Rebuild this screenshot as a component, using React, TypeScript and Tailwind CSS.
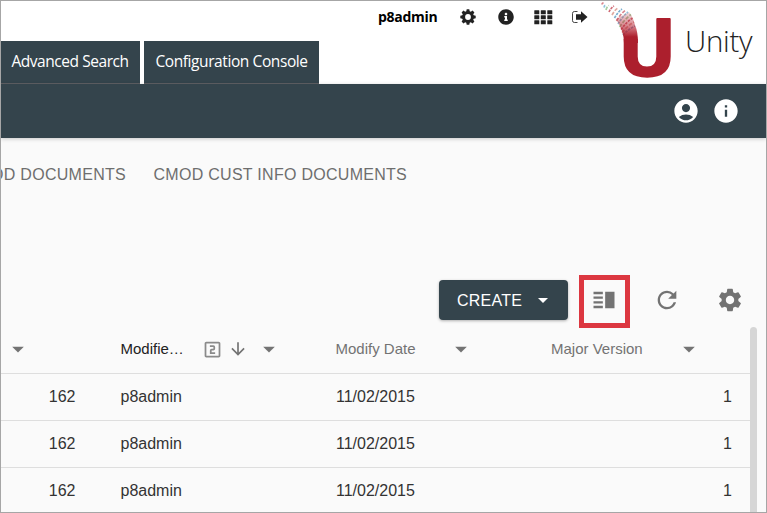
import React from "react";
import {
  MdAccountCircle,
  MdInfo,
  MdVerticalSplit,
  MdRefresh,
  MdSettings,
  MdArrowDropDown,
  MdOutlineLooksTwo,
  MdArrowDownward,
} from "react-icons/md";
import { FaInfoCircle } from "react-icons/fa";

const rows = [
  { id: "162", modifier: "p8admin", date: "11/02/2015", version: "1" },
  { id: "162", modifier: "p8admin", date: "11/02/2015", version: "1" },
  { id: "162", modifier: "p8admin", date: "11/02/2015", version: "1" },
];

function CogIcon() {
  return (
    <svg width="16" height="16" viewBox="0 0 16 16" fill="#222">
      <path
        fillRule="evenodd"
        d="M6.7.3h2.6l.4 2 1.1.5 1.8-1.2 1.8 1.8-1.2 1.8.5 1.1 2 .4v2.6l-2 .4-.5 1.1 1.2 1.8-1.8 1.8-1.8-1.2-1.1.5-.4 2H6.7l-.4-2-1.1-.5-1.8 1.2-1.8-1.8 1.2-1.8-.5-1.1-2-.4V6.7l2-.4.5-1.1-1.2-1.8 1.8-1.8 1.8 1.2 1.1-.5zM8 5.1a2.9 2.9 0 1 0 0 5.8 2.9 2.9 0 0 0 0-5.8z"
      />
    </svg>
  );
}

function GridIcon() {
  return (
    <svg width="19" height="15" viewBox="0 0 19 15" fill="#222">
      {[0, 5, 10].map((y) =>
        [0, 6.5, 13].map((x) => (
          <rect key={`${x}-${y}`} x={x + 0.3} y={y + 0.3} width="5" height="4" rx="0.4" />
        ))
      )}
    </svg>
  );
}

function LogoutIcon() {
  return (
    <svg width="17" height="14" viewBox="0 0 17 14">
      <path d="M6.500 1.500H3.300A1.900 1.900 0 0 0 1.500 3.300v7.400a1.900 1.900 0 0 0 1.800 1.800h3.200" fill="none" stroke="#444" strokeWidth="1" />
      <path d="M10 1.200 16.500 7 10 12.800V9.800H5V4.200h5z" fill="#222" />
    </svg>
  );
}

function UnityLogo() {
  const colors = ["#d9848c", "#8fc4dc", "#a6cfa2", "#cf6b76", "#e0a9a0", "#79aed0"];
  // Each entry is a short band across the plume: start x, start y, end x, end y.
  const bands = [
    [2, 3.500, 3.500, 2.500], [4, 6.5, 6, 4.5], [6, 9, 9, 4.5], [9, 11, 14, 5],
    [12, 14, 18.500, 6.500], [14.500, 17, 22, 8], [16.500, 20, 25, 9.500],
    [18, 23, 28, 11], [19.500, 26, 31, 13.500], [21, 28.500, 32.500, 17],
    [22, 31.500, 34, 21], [23, 34, 35, 25],
  ];
  return (
    <svg width="76" height="80" viewBox="0 0 76 80">
      <defs>
        <linearGradient id="stem" x1="0" y1="0" x2="0" y2="1">
          <stop offset="0" stopColor="#b51f2e" stopOpacity="0.15" />
          <stop offset="0.45" stopColor="#b51f2e" stopOpacity="0.55" />
          <stop offset="0.8" stopColor="#ac1f2d" />
        </linearGradient>
      </defs>
      {bands.map(([x1, y1, x2, y2], i) => (
        <path
          key={i}
          d={`M${x1} ${y1} Q${(x1 + x2) / 2 - 0.5} ${(y1 + y2) / 2 - 1.5} ${x2} ${y2}`}
          fill="none"
          stroke={colors[i % colors.length]}
          strokeWidth="1.7"
          strokeDasharray={i % 2 ? "2.500 1" : "3.500 1.500"}
        />
      ))}
      <path d="M16 18 29 11Q33 16 35 24Q38 31 38 42H24Q24 30 16 18Z" fill="url(#stem)" />
      <path
        d="M23.700 38h14v17.500q0 10 9.300 10t9.300-10V18q0-1 1-1h12.400q1 0 1 1v37.500q0 21.200-23.500 21.200T23.700 55.500z"
        fill="#ac1f2d"
      />
    </svg>
  );
}

export default function App() {
  return (
    <div className="flex h-[513px] w-[767px] flex-col overflow-hidden border border-[#a6a6a6] bg-[#fafafa] font-['Liberation_Sans',Arial,sans-serif] text-[16px] leading-[20px] whitespace-nowrap">
      <header className="flex h-[83px] shrink-0 bg-white font-['Open_Sans',sans-serif]">
        <div className="flex w-[599px] flex-col justify-between">
          <div className="flex h-[32px] items-center pl-[377px]">
            <span className="w-[82px] text-[14px] font-bold tracking-[-0.3px] text-black">p8admin</span>
            <span className="w-[38px]"><CogIcon /></span>
            <span className="w-[36px]"><FaInfoCircle size={16} color="#222" /></span>
            <span className="w-[37px]"><GridIcon /></span>
            <LogoutIcon />
          </div>
          <nav className="flex h-[43px] gap-1 text-[15.5px] text-white">
            <a className="flex w-[139px] items-center justify-center border-b border-[#5f6064] bg-[#34444c] pr-px pb-[3px] tracking-[-0.45px]">Advanced Search</a>
            <a className="flex w-[175px] items-center justify-center border-b border-[#5f6064] bg-[#34444c] pb-[3px] tracking-[-0.41px]">Configuration Console</a>
          </nav>
        </div>
        <UnityLogo />
        <span className="mt-[20px] ml-[9px] text-[29.5px] leading-[40px] font-light tracking-[-0.3px] text-[#222]">Unity</span>
      </header>
      <div className="z-10 flex h-[54px] shrink-0 items-center justify-end gap-[12px] bg-[#34444c] pr-[26px] text-white shadow-[0_1px_4px_rgba(0,0,0,0.2)]">
        <MdAccountCircle size={28} />
        <MdInfo size={28} />
      </div>
      <div className="mt-[27px] flex h-[20px] shrink-0 gap-[27.500px] tracking-[0.28px] text-[#6e6e6e]">
        <span className="flex w-[125px] justify-end">OD DOCUMENTS</span>
        <span>CMOD CUST INFO DOCUMENTS</span>
      </div>
      <div className="mt-[90px] flex h-[53px] shrink-0 pl-[438px] text-[#737373]">
        <button className="mt-[5px] flex h-[40px] w-[129px] items-center rounded-[4px] bg-[#34444c] pl-[18px] text-left text-white shadow-[0_1px_3px_rgba(0,0,0,0.3)]">
          <span className="w-[74px] pt-px tracking-[0.25px]">CREATE</span>
          <MdArrowDropDown size={24} />
        </button>
        <div className="ml-[11px] flex h-[53px] w-[51px] justify-center border-[5px] border-[#dc3740] pt-[6px] pr-[2px]">
          <MdVerticalSplit size={28} />
        </div>
        <MdRefresh className="mt-[11px] ml-[22.500px]" size={28} />
        <MdSettings className="mt-[11px] ml-[35px]" size={28} />
      </div>
      <div className="flex min-h-0 flex-1">
        <main className="w-[749px]">
          <div className="flex h-[46px] items-center border-b border-[#dedede] pb-[3px] text-[15px] text-[#737373]">
            <span className="w-[117px] pl-[2.500px]"><MdArrowDropDown size={28} /></span>
            <span className="w-[83.500px] pl-[2.500px] text-[#222]">Modifie…</span>
            <MdOutlineLooksTwo className="text-[#8a8a8a]" size={21} />
            <MdArrowDownward className="ml-[5.500px]" size={20} />
            <span className="ml-[7px] w-[80.500px]"><MdArrowDropDown size={28} /></span>
            <span className="w-[111.500px]">Modify Date</span>
            <span className="w-[104px]"><MdArrowDropDown size={28} /></span>
            <span className="w-[124px]">Major Version</span>
            <MdArrowDropDown size={28} />
          </div>
          {rows.map((row, i) => (
            <div key={i} className="flex h-[47px] items-center border-b border-[#dedede] text-[#333]">
              <span className="w-[74.500px] text-right">{row.id}</span>
              <span className="w-[260.500px] pl-[45px]">{row.modifier}</span>
              <span className="w-[200px]">{row.date}</span>
              <span className="w-[196px] text-right">{row.version}</span>
            </div>
          ))}
        </main>
        <div className="mt-[-1px] w-[7px] rounded-t-[4px] bg-[#d6d6d6]" />
      </div>
    </div>
  );
}
